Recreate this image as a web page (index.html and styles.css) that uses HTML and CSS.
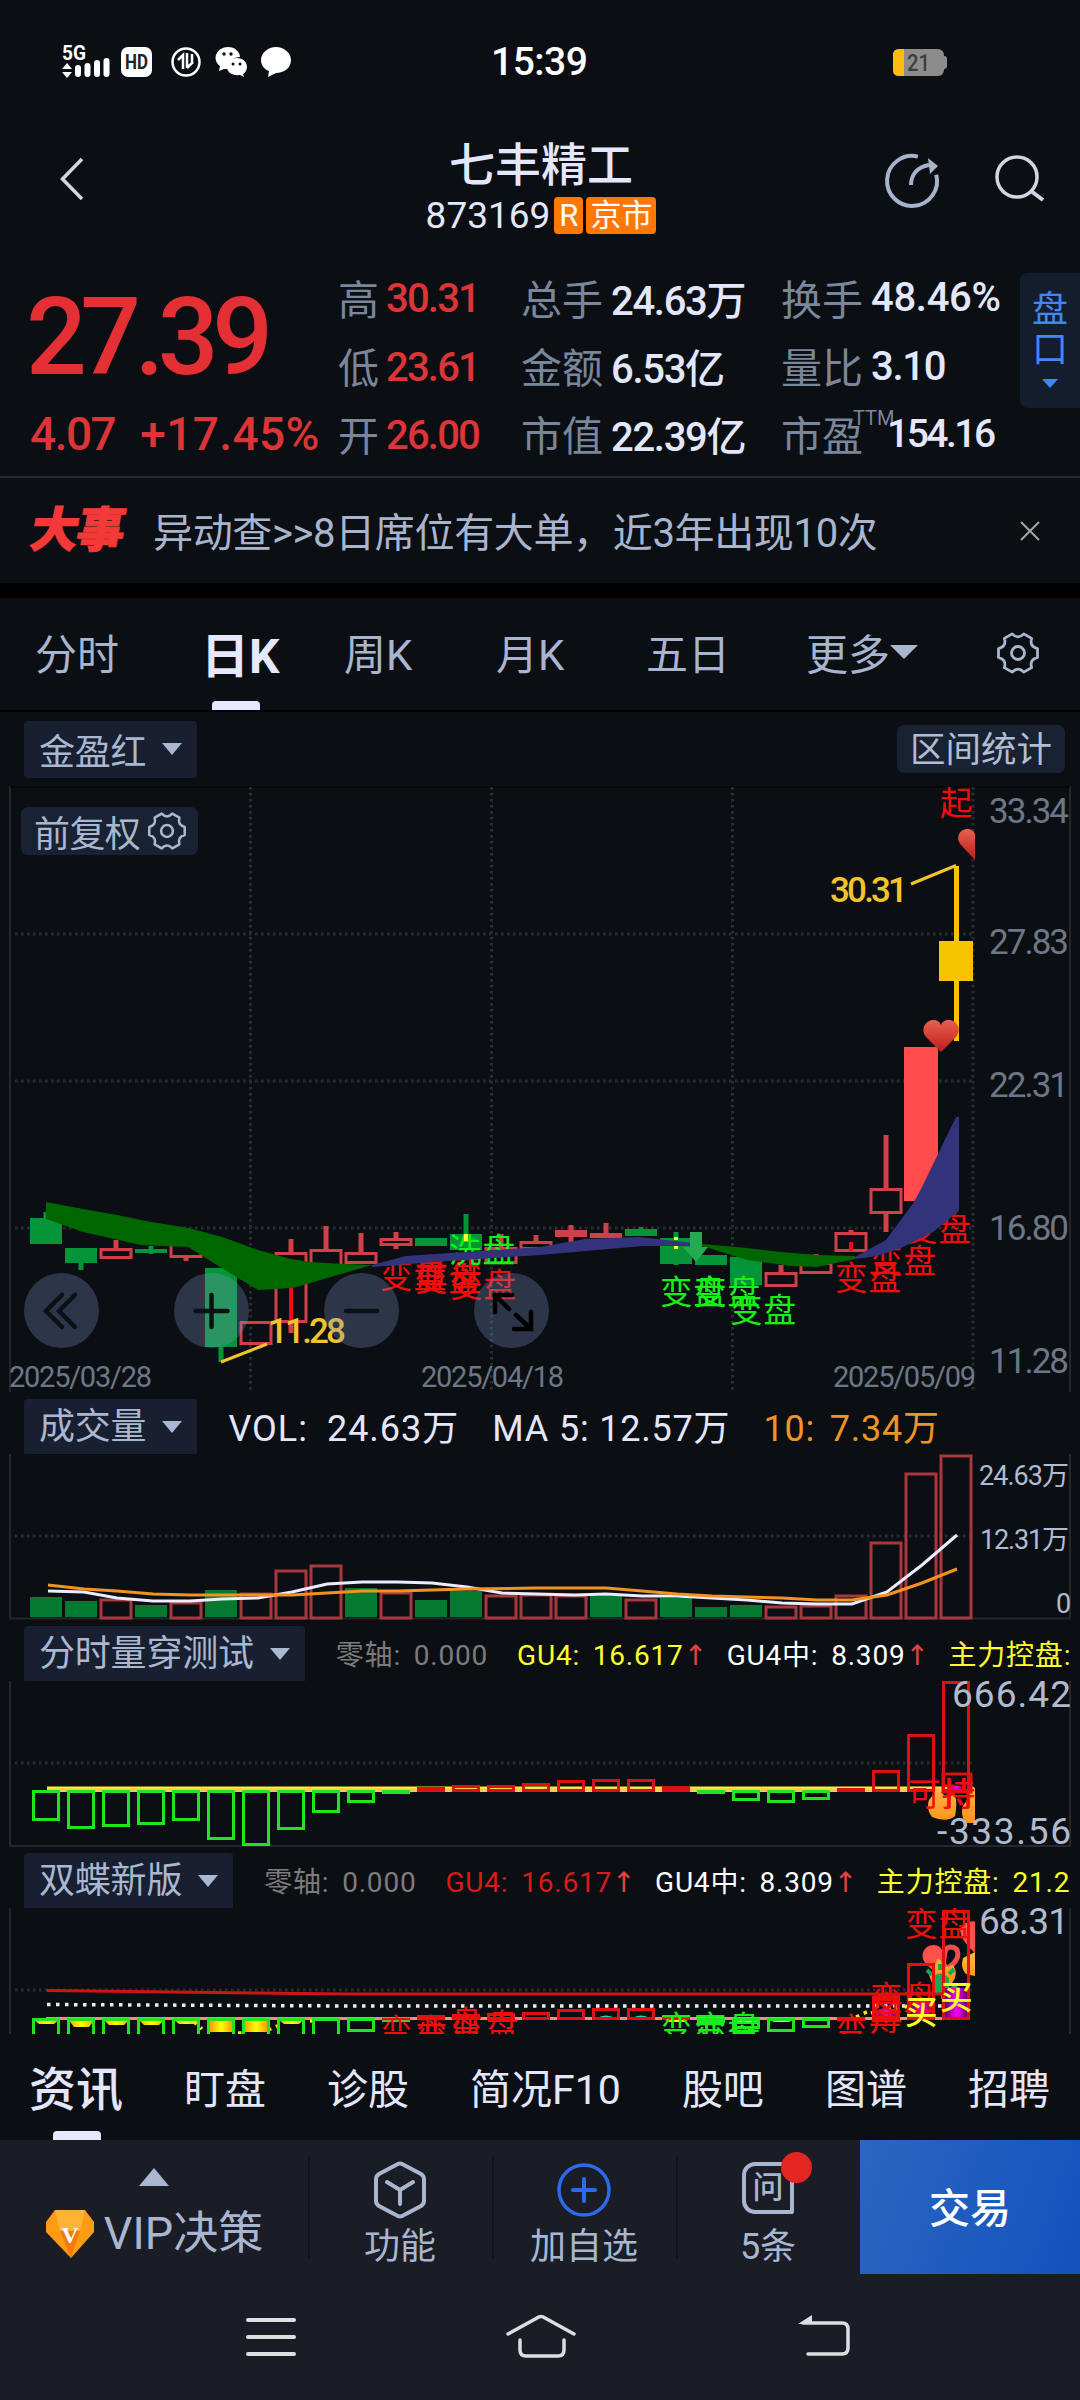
FILE: index.html
```html
<!DOCTYPE html>
<html lang="zh-CN">
<head>
    <meta charset="UTF-8">
    <meta name="viewport" content="width=device-width, initial-scale=1.0">
    <title>七丰精工 873169</title>
    <link rel="stylesheet" href="styles.css">
</head>
<body>
    <div class="status-bar">
        <svg class="status-icons" width="240" height="40" viewBox="56 42 240 40">
            <text x="62" y="60" class="net" textLength="24" lengthAdjust="spacingAndGlyphs">5G</text>
            <path d="M67 63l5 6h-10zM67 78l5-6h-10z" fill="#fff"/>
            <path d="M78 74v-6M87.500 74v-8M97 74v-11M106.500 74v-13" stroke="#fff" stroke-width="6" stroke-linecap="round"/>
            <rect x="121" y="47" width="31" height="30" rx="7" fill="#fff"/>
            <text x="125" y="69" class="hd" textLength="23" lengthAdjust="spacingAndGlyphs">HD</text>
            <circle cx="186" cy="62" r="13.500" fill="none" stroke="#fff" stroke-width="2.500"/>
            <path d="M178 60l5-5v14M187 53v15M187 68l6-6M192 54v8" fill="none" stroke="#fff" stroke-width="2.500"/>
            <path d="M228 47c7 0 12 5 12 10-7 0-13 5-12 12l-4 0-5 2 1-5c-9-7-3-19 8-19z" fill="#fff"/>
            <path d="M237 58c6 0 10 4 10 9 0 3-2 6-4 7l1 3-4-2c-8 1-13-3-13-8s4-9 10-9z" fill="#fff"/>
            <g fill="#0b0f14"><circle cx="224" cy="54" r="1.700"/><circle cx="231" cy="54" r="1.700"/><circle cx="233" cy="64" r="1.500"/><circle cx="240" cy="64" r="1.500"/></g>
            <path d="M276 47c8 0 15 6 15 13 0 8-7 13-15 13l-8 4 1-6c-5-2-8-6-8-11 0-7 7-13 15-13z" fill="#fff"/>
        </svg>
        <span class="clock">15:39</span>
        <svg class="battery" width="56" height="30" viewBox="892 47 56 30">
            <rect x="893" y="49" width="51" height="27" rx="6" fill="#8c8c8c"/>
            <path d="M944 56q3 0 3 3v7q0 3-3 3z" fill="#8c8c8c"/>
            <path d="M904 49h-5q-6 0-6 6v15q0 6 6 6h5z" fill="#ffb90f"/>
            <text x="907" y="71" class="batt-num" textLength="23" lengthAdjust="spacingAndGlyphs">21</text>
        </svg>
    </div>

    <div class="title-bar">
        <svg class="back" width="30" height="50" viewBox="58 154 30 50"><path d="M82 159L62.500 179l19.500 20" fill="none" stroke="#d3d5e3" stroke-width="3.500"/></svg>
        <div class="stock-title">
            <h1>七丰精工</h1>
            <div class="code-row"><span class="code">873169</span><span class="tag">R</span><span class="tag tag-market">京市</span></div>
        </div>
        <svg class="title-icons" width="174" height="60" viewBox="880 150 174 60" fill="none">
            <path d="M914 156A25 25 0 1 0 935 171" stroke="#a5b4cb" stroke-width="4" transform="rotate(9 912 181)"/>
            <path d="M911 185c0-10 6-18 18-20" stroke="#a5b4cb" stroke-width="4"/>
            <path d="M928 158l10 8-8 8z" fill="#a5b4cb"/>
            <circle cx="1017" cy="177" r="20" stroke="#d3d5e3" stroke-width="3.500"/>
            <path d="M1031 191l12 9" stroke="#d3d5e3" stroke-width="4"/>
        </svg>
    </div>

    <div class="quote">
        <div class="price-box">
            <div class="price">27.39</div>
            <div class="change"><span>4.07</span><span class="pct">+17.45%</span></div>
        </div>
        <div class="stats">
            <label>高</label><b class="up">30.31</b><label>总手</label><b>24.63万</b><label>换手</label><b class="turnover">48.46%</b>
            <label>低</label><b class="up">23.61</b><label>金额</label><b>6.53亿</b><label>量比</label><b>3.10</b>
            <label>开</label><b class="up">26.00</b><label>市值</label><b>22.39亿</b><label class="pe">市盈<sup>TTM</sup></label><b class="pe-value">154.16</b>
        </div>
        <div class="pankou"><span>盘</span><span>口</span><i></i></div>
    </div>

    <div class="news">
        <span class="news-logo">大事</span>
        <span class="news-text">异动查&gt;&gt;8日席位有大单，近3年出现10次</span>
        <svg width="20" height="20" viewBox="0 0 20 20"><path d="M1 1l18 18M19 1L1 19" stroke="#a4a6a4" stroke-width="2"/></svg>
    </div>

    <div class="period-tabs">
        <span>分时</span>
        <span class="active">日K</span>
        <span>周K</span>
        <span>月K</span>
        <span>五日</span>
        <span class="more">更多<i class="arrow-down"></i></span>
        <svg width="44" height="44" viewBox="-22 -23 44 44"><use href="#gear"/></svg>
    </div>

    <div class="chart-tools">
        <span class="picker">金盈红<i class="arrow-down"></i></span>
        <span class="range-btn">区间统计</span>
    </div>

    <div class="main-chart">
        <svg id="kline" width="1080" height="606" viewBox="0 786 1080 606">
            <defs>
                <g id="gear" fill="none" stroke="#a9b7d0" stroke-width="2.800" stroke-linejoin="round">
                    <path d="M19.500-4.500V4.500Q11.300 6.500 13.600 14.600L5.800 19.100Q0 13-5.800 19.100L-13.600 14.600Q-11.300 6.500-19.500 4.500V-4.500Q-11.300-6.500-13.600-14.600L-5.800-19.100Q0-13 5.800-19.100L13.600-14.600Q11.300-6.500 19.500-4.500Z"/>
                    <circle r="6.500"/>
                </g>
                <linearGradient id="heartFill" x1="0" y1="0" x2="0" y2="1"><stop offset="0" stop-color="#e8604f"/><stop offset="1" stop-color="#bd1d1c"/></linearGradient>
                <linearGradient id="thumbFill" x1="0" y1="0" x2="0" y2="1"><stop offset="0" stop-color="#ffb74a"/><stop offset="1" stop-color="#ff9216"/></linearGradient>
                <linearGradient id="purple"><stop offset="0" stop-color="#53005c"/><stop offset=".5" stop-color="#f500f5"/><stop offset="1" stop-color="#53005c"/></linearGradient>
                <linearGradient id="gold"><stop offset="0" stop-color="#ff9d00"/><stop offset=".5" stop-color="#ffff00"/><stop offset="1" stop-color="#ff9d00"/></linearGradient>
                <clipPath id="plot"><rect x="10" y="780" width="965" height="1254"/></clipPath>
            </defs>
            <path d="M10 1392V786H1070V1392" class="frame"/>
            <path d="M10 786H1070" stroke="#030507" stroke-width="3"/>
            <path d="M250.500 787V1390M491.500 787V1390M732.500 787V1390M973 787V1390M15 934H973M15 1081H973M15 1228H973" class="grid"/>
            <g id="candles"></g>
            <g clip-path="url(#plot)">
                <g class="mark red">
                    <text x="380" y="1288">变盘</text><text x="415" y="1291">变盘</text><text x="415" y="1283">盘</text>
                    <text x="450" y="1297">变盘</text><text x="450" y="1283">变</text>
                    <text x="835" y="1290">变盘</text><text x="870" y="1273">变盘</text><text x="905" y="1241">变盘</text>
                    <text x="940" y="815">起爆</text>
                </g>
                <g class="mark lime">
                    <text x="660" y="1304">变盘</text><text x="694" y="1304">变盘</text><text x="730" y="1322">变盘</text>
                    <text x="449" y="1262">洗盘</text>
                </g>
            </g>
            <path d="M46 1202L83 1209L117 1215L151 1222L189 1228L222 1237L258 1250L291 1259L310 1262L344 1264L372 1265L293 1288L258 1290L238 1278L188 1247L141 1245L83 1232L46 1219Z" fill="#006700"/>
            <path d="M372 1265L406 1256L465 1252L540 1247L585 1239L640 1237L692 1243L692 1246L643 1246L540 1255L448 1261L372 1267Z" fill="#33337b"/>
            <path d="M691 1243L747 1248L781 1252L819 1255L855 1256V1259L817 1267L791 1266L747 1260L709 1248Z" fill="#006700"/>
            <path d="M855 1257L886 1240L914 1202L922 1187L956 1117H959V1211L933 1232L901 1248L877 1256L855 1259Z" fill="#33337b"/>
            <path d="M690 1232h12v15h6l-12 15l-13-15h7z" fill="#22ab50"/>
            <path d="M676 1237v3M676 1246v3M466 1234v7" stroke="#ffff2a" stroke-width="4"/>
            <g clip-path="url(#plot)" fill="url(#heartFill)">
                <path d="M941 1052l-14-14c-8-8-1-18 6-18 4 0 7 2 8 5 1-3 4-5 8-5 8 0 14 10 6 18z"/>
                <path d="M975 860l-13-14c-8-8-2-17 5-17 4 0 7 2 8 5 1-3 4-5 8-5 8 0 14 10 6 18z"/>
            </g>
            <path d="M221 1362L267 1344M911 884L956 865.500" stroke="#f3c32c" stroke-width="3"/>
            <g class="num gold">
                <text x="268" y="1343" textLength="78">11.28</text>
                <text x="830" y="902" textLength="78">30.31</text>
            </g>
            <g class="num axis">
                <text x="989" y="823" textLength="80">33.34</text>
                <text x="989" y="953.500" textLength="80">27.83</text>
                <text x="989" y="1097" textLength="80">22.31</text>
                <text x="989" y="1240" textLength="80">16.80</text>
                <text x="989" y="1373" textLength="80">11.28</text>
            </g>
            <g class="num date">
                <text x="9" y="1386.500" textLength="143">2025/03/28</text>
                <text x="421" y="1386.500" textLength="143">2025/04/18</text>
                <text x="833" y="1386.500" textLength="143">2025/05/09</text>
            </g>
        </svg>
        <span class="adjust">前复权<svg width="40" height="40" viewBox="-22 -22 44 44"><use href="#gear"/></svg></span>
        <div class="chart-btns">
            <button><svg viewBox="0 0 75 75"><path d="M38 22L22 38l16 16M51 22L35 38l16 16"/></svg></button>
            <button><svg viewBox="0 0 75 75"><path d="M37.500 22v32M21.500 38h32"/></svg></button>
            <button><svg viewBox="0 0 75 75"><path d="M22 38h31"/></svg></button>
            <button class="expand"><svg viewBox="0 0 75 75"><path d="M21 39V22h17M21 22l14 14M57 39v17H40M57 56L42 42"/></svg></button>
        </div>
    </div>

    <div class="sub-head vol-head">
        <span class="picker">成交量<i class="arrow-down"></i></span>
        <span>VOL: 24.63万</span><span class="ma">MA 5: 12.57万</span><span class="orange">10: 7.34万</span>
    </div>
    <svg id="volume" class="sub-chart" width="1080" height="166" viewBox="0 1454 1080 166">
        <path d="M10 1454V1618.500H1070V1454" class="frame"/>
        <path d="M15 1536H973" class="grid"/>
        <g id="vol-bars"></g>
        <path d="M48 1591L84 1592L117 1598L153 1601L190 1601L222 1599L258 1598L292 1592L327 1584L362 1582L398 1582L432 1583L467 1587L502 1593L537 1594L575 1595L606 1594L642 1596L677 1596L712 1598L747 1600L782 1603L817 1604L852 1604L887 1592L922 1565L957 1535" class="line" stroke="#ececff"/>
        <path d="M48 1585L84 1589L117 1591L153 1594L190 1595L292 1595L327 1593L362 1591L398 1591L432 1590L467 1589L537 1588L606 1588L642 1591L677 1594L712 1596L782 1598L817 1600L852 1600L887 1595L922 1583L957 1569" class="line" stroke="#f0941f"/>
        <g class="num vol-axis">
            <text x="979" y="1485" textLength="90">24.63万</text>
            <text x="980" y="1549" textLength="89">12.31万</text>
            <text x="1056" y="1613">0</text>
        </g>
    </svg>

    <div class="sub-head">
        <span class="picker">分时量穿测试<i class="arrow-down"></i></span>
        <span class="grey">零轴: 0.000</span><span class="yellow">GU4: 16.617<em>↑</em></span><span class="white">GU4中: 8.309<em>↑</em></span><span class="yellow">主力控盘:</span>
    </div>
    <svg id="gu" class="sub-chart" width="1080" height="166" viewBox="0 1681 1080 166">
        <path d="M10 1681V1846H1070V1681" class="frame"/>
        <path d="M15 1763H973" class="grid"/>
        <path d="M47 1789.500H958" stroke="#ffc568" stroke-width="5"/>
        <path d="M47 1787.500H958" stroke="#f8f028" stroke-width="2"/>
        <g clip-path="url(#plot)">
            <path d="M934 1786q5 3 10 9l10-1q4 7 1 22q-8 7-23 1q-6-8-3-17q6-6 5-14zM972 1786q5 3 10 9v28h-16q-6-8-3-17q7-9 9-20z" fill="url(#thumbFill)"/>
            <path d="M946 1790q12-9 20 0z" fill="url(#purple)"/>
            <g id="gu-bars"></g>
            <g class="mark red"><text x="908" y="1806">可持</text><text x="943" y="1806">持股</text></g>
        </g>
        <g class="num big-axis">
            <text x="952" y="1707" textLength="119">666.42</text>
            <text x="937" y="1844" textLength="134">-333.56</text>
        </g>
    </svg>

    <div class="sub-head">
        <span class="picker">双蝶新版<i class="arrow-down"></i></span>
        <span class="grey">零轴: 0.000</span><span class="red-text">GU4: 16.617<em>↑</em></span><span class="white">GU4中: 8.309<em>↑</em></span><span class="yellow">主力控盘: 21.202</span>
    </div>
    <svg id="butterfly" class="sub-chart" width="1080" height="126" viewBox="0 1908 1080 126">
        <path d="M10 1908V2040M1070 1908V2040" class="frame"/>
        <path d="M15 1990H973" class="grid"/>
        <g clip-path="url(#plot)">
            <path d="M46 2018.500H958" stroke="#ee8e80" stroke-width="3"/>
            <path d="M47 2004.500L350 2006H945" class="dots"/>
            <g fill="#ff5149">
                <path d="M941 1978l-14-13c-9-9-3-20 7-20 5 0 9 4 9 9l5 14z"/>
                <path d="M941 1973c5-14 1-25 9-26 11 0 9 11 3 17z" fill="none" stroke="#ef4f4c" stroke-width="5"/>
                <path d="M980 1922q-16-3-20 8q1 11 15 23h5z"/>
            </g>
            <path d="M963 1958l12-6v24l-9-2q-6-6-3-16zM929 1975q5-4 8-16q5-1 5 9l11-3q6 9-1 18h-20z" fill="url(#thumbFill)"/>
            <path d="M934 1991v-12q6-7 13 0v12zM927 1970l5 5M954 1969l-5 5M940 1964v6M951 1989l6-3M941 1997h6" stroke="#1da650" fill="#1da650" stroke-width="4"/>
            <g id="bf-bars"></g>
            <g class="mark red">
                <text x="380" y="2043">变</text><text x="415" y="2043">变</text><text x="415" y="2049">变</text><text x="450" y="2042">变</text><text x="450" y="2035">盘</text><text x="486" y="2038">盘</text>
                <text x="835" y="2042">变盘</text><text x="870" y="2010">变盘</text><text x="870" y="2020">盘</text><text x="905" y="1936">变盘</text>
            </g>
            <g class="mark lime"><text x="660" y="2040">变</text><text x="694" y="2040">变盘</text><text x="694" y="2048">变盘</text></g>
            <path d="M47 1990.500L350 1994H945" class="line" stroke="#d01414"/>
            <g class="mark yellow-mark"><text x="905" y="2024">买</text><text x="940" y="2009">买</text></g>
        </g>
        <g class="num big-axis"><text x="979" y="1934" textLength="90">68.31</text></g>
    </svg>

    <div class="info-tabs">
        <span class="active">资讯</span><span>盯盘</span><span>诊股</span><span>简况F10</span><span>股吧</span><span>图谱</span><span>招聘</span>
    </div>

    <div class="bottom-bar">
        <div class="vip">
            <i class="arrow-up"></i>
            <div class="vip-label">
                <svg width="50" height="50" viewBox="0 0 50 50">
                    <path d="M10 1h30l9 12v10L26 49 1 23V13z" fill="#ff9c14"/>
                    <path d="M10 1h30l-5 21H15z" fill="#ffb336"/>
                    <path d="M15 22h20l-9 27z" fill="#f27a10"/>
                    <text x="25" y="34" class="vip-v">V</text>
                </svg>
                <span>VIP决策</span>
            </div>
        </div>
        <div class="tool">
            <svg width="60" height="60" viewBox="-30 -30 60 60" fill="none" stroke="#a9b6d0" stroke-width="4" stroke-linejoin="round" stroke-linecap="round"><path d="M-4-25Q0-28 4-25L21-16Q24-14 24-11V11Q24 14 21 16L4 25Q0 28-4 25L-21 16Q-24 14-24 11V-11Q-24-14-21-16ZM-13-8L0 0L13-8M0 0V14"/></svg>
            <span>功能</span>
        </div>
        <div class="tool">
            <svg width="60" height="60" viewBox="-30 -30 60 60" fill="none" stroke="#2c6ae8"><circle r="25" stroke-width="3.500"/><path d="M-11 0H11M0-11V11" stroke-width="4" stroke-linecap="round"/></svg>
            <span>加自选</span>
        </div>
        <div class="tool ask">
            <div class="ask-icon">问</div>
            <span>5条</span>
        </div>
        <div class="trade">交易</div>
    </div>

    <div class="nav-bar">
        <svg width="1080" height="126" viewBox="0 2274 1080 126" fill="none" stroke="#dedee0" stroke-width="4" stroke-linecap="round" stroke-linejoin="round">
            <path d="M248 2320H294M248 2337H294M248 2354H294"/>
            <path d="M508 2334L537 2318Q541 2315 545 2318L574 2334M520 2340V2350Q520 2356 526 2356H558Q564 2356 564 2350V2340" stroke-width="3.500"/>
            <path d="M803 2323H842Q848 2323 848 2329V2348Q848 2354 842 2354H808" stroke-width="3.500"/>
            <path d="M798 2324L812 2315V2324Z" fill="#dedee0" stroke="none"/>
        </svg>
    </div>

    <script src="charts.js"></script>
</body>
</html>
```
FILE: styles.css
```css
* {
    box-sizing: border-box;
    margin: 0;
    padding: 0;
}

body {
    width: 1080px;
    background: #0b0f14;
    color: #e4e7fb;
    font-family: Roboto, "Noto Sans CJK SC", sans-serif;
    overflow-x: hidden;
}

svg {
    display: block;
    flex: none;
}

span, b, label {
    white-space: nowrap;
}

/* status bar */
.status-bar {
    display: grid;
    grid-template-columns: 240px 1fr 56px;
    height: 124px;
    padding: 0 132px 0 56px;
    align-items: center;
}

.clock {
    font-size: 39px;
    font-weight: 500;
    color: #fff;
    padding-left: 195px;
    letter-spacing: -0.5px;
}

.net {
    font-size: 21px;
    font-weight: 700;
    fill: #fff;
}

.hd {
    font-size: 20px;
    font-weight: 700;
    fill: #20242a;
}

.batt-num {
    font-size: 23px;
    font-weight: 500;
    fill: #3d3d3d;
}

/* title */
.title-bar {
    display: grid;
    grid-template-columns: 30px 1fr 174px;
    height: 136px;
    padding: 0 26px 0 58px;
}

.back {
    margin-top: 30px;
}

.title-icons {
    margin-top: 26px;
}

.stock-title {
    display: flex;
    flex-direction: column;
    align-items: center;
    padding: 15px 0 0 114px;
}

h1 {
    font-size: 46px;
    line-height: 52px;
    font-weight: 500;
}

.code-row {
    display: flex;
    gap: 4px;
    margin-top: 6px;
    line-height: 37px;
}

.code {
    font-size: 37px;
}

.tag {
    background: #ff7706;
    color: #fff;
    border-radius: 4px;
    font-size: 31px;
    width: 29px;
    text-align: center;
}

.tag-market {
    width: 70px;
    margin-left: -1px;
}

/* quote */
.quote {
    display: grid;
    grid-template-columns: 308px 1fr 60px;
    height: 218px;
    padding-left: 30px;
    border-bottom: 2px solid #262a2f;
}

.price {
    font-size: 107px;
    line-height: 112px;
    margin-top: 22px;
    color: #e42f34;
    font-weight: 500;
    letter-spacing: -6.5px;
    margin-left: -4px;
}

.change {
    display: flex;
    gap: 25px;
    margin-top: 13px;
    font-size: 46px;
    line-height: 54px;
    font-weight: 500;
    color: #dd3437;
    letter-spacing: -1.5px;
}

.pct {
    letter-spacing: 0.4px;
}

.stats {
    display: grid;
    grid-template-columns: 48px 135px 90px 170px 90px 146px;
    grid-template-rows: 69px 68px 68px;
    padding-top: 2px;
    align-items: center;
}

.stats label {
    font-size: 41px;
    color: #79869b;
}

.stats b {
    font-size: 40px;
    font-weight: 500;
    letter-spacing: -1.3px;
    padding-top: 2px;
}

.stats .up {
    color: #dd3437;
    letter-spacing: -1.8px;
    padding-top: 4px;
}

.stats .turnover {
    letter-spacing: -0.3px;
}

.pe sup {
    display: inline-block;
    font-size: 20px;
    vertical-align: 26px;
    line-height: 1;
    width: 0;
    margin-left: -10px;
}

.stats .pe-value {
    padding-left: 16px;
    font-size: 39px;
    letter-spacing: -2.5px;
}

.pankou {
    margin-top: 13px;
    height: 135px;
    display: flex;
    flex-direction: column;
    align-items: center;
    padding-top: 17px;
    background: #141d2e;
    border-radius: 8px 0 0 8px;
    color: #4087f2;
    font-size: 36px;
    line-height: 40px;
}

.pankou i {
    margin-top: 9px;
    border: 8px solid transparent;
    border-top: 9px solid #4087f2;
    border-bottom: 0;
}

/* news */
.news {
    display: grid;
    grid-template-columns: 122px 1fr 20px;
    align-items: center;
    height: 105px;
    padding: 0 40px 0 31px;
}

.news-logo {
    font-size: 48px;
    font-weight: 900;
    color: #f33a38;
    transform: skewX(-10deg);
    -webkit-text-stroke: 1px #f33a38;
    letter-spacing: -2px;
    line-height: 50px;
}

.news-text {
    font-size: 40px;
    color: #a9b5cf;
    letter-spacing: -0.35px;
    padding-bottom: 2px;
}

/* period tabs */
.period-tabs {
    position: relative;
    display: grid;
    grid-template-columns: 166px 143px 152px 150px 160px 190px 44px;
    height: 129px;
    padding: 0 0 5px 35px;
    border-top: 15px solid #000;
    border-bottom: 2px solid #020304;
    align-items: center;
    font-size: 42px;
    color: #a9b5cf;
}

.period-tabs .active {
    font-size: 48px;
    font-weight: 700;
    color: #e6e8fd;
}

.active::after {
    content: "";
    position: absolute;
    left: 212px;
    bottom: 0;
    width: 48px;
    height: 9px;
    background: #e6e8fd;
    border-radius: 4px 4px 0 0;
}

.arrow-down {
    display: inline-block;
    border: 10.5px solid transparent;
    border-top: 12px solid #a9b7d0;
    border-bottom: 0;
}

.more {
    display: flex;
    align-items: center;
}

.more .arrow-down {
    border-width: 14px 14px 0;
}

/* chart */
.chart-tools {
    display: flex;
    justify-content: space-between;
    height: 74px;
    padding: 9px 15px 0 24px;
}

.picker {
    display: flex;
    align-items: center;
    gap: 16px;
    height: 57px;
    padding: 0 15px 1px 15px;
    background: #181f31;
    border-radius: 4px;
    font-size: 36px;
    letter-spacing: -0.2px;
    word-spacing: 0;
    color: #a9b7d0;
}

.range-btn {
    margin-top: 4px;
    height: 48px;
    width: 168px;
    text-align: center;
    line-height: 51px;
    background: #192233;
    border-radius: 7px;
    font-size: 35.5px;
    color: #b0bdd4;
}

.main-chart {
    position: relative;
    height: 606px;
}

.adjust {
    position: absolute;
    left: 21px;
    top: 21px;
    width: 177px;
    height: 48px;
    display: flex;
    align-items: center;
    gap: 7px;
    padding-left: 13px;
    background: #192233;
    border-radius: 7px;
    font-size: 36px;
    letter-spacing: -0.6px;
    color: #a9b7d0;
}

.chart-btns {
    position: absolute;
    left: 24px;
    top: 487px;
    display: flex;
    gap: 75px;
}

.chart-btns button {
    width: 75px;
    height: 75px;
    border: 0;
    border-radius: 50%;
    background: rgba(127, 150, 200, 0.29);
}

.chart-btns path {
    fill: none;
    stroke: #0c0f13;
    stroke-width: 4.5;
    stroke-linecap: round;
}

.chart-btns .expand path {
    stroke: #000;
}

.frame {
    fill: none;
    stroke: #24272b;
    stroke-width: 2;
}

.grid {
    fill: none;
    stroke: #2a2d31;
    stroke-width: 3;
    stroke-dasharray: 2.5 3.5;
}

.mark text {
    font-family: "Noto Sans CJK SC", sans-serif;
    font-size: 32.5px;
    letter-spacing: 1px;
}

.red { fill: #f20d0d; }
.lime { fill: #17f017; }
.yellow-mark { fill: #ffff1e; font-weight: 500; }

.num { font-size: 35px; }
.gold { fill: #f3c32c; font-weight: 500; }
.axis { fill: #6d7786; }
.date { fill: #6d7786; font-size: 29px; }
.vol-axis { fill: #b0bbd0; font-size: 27px; }
.big-axis { fill: #b0bbd0; font-size: 37px; }

.line {
    fill: none;
    stroke-width: 3;
}

.dots {
    fill: none;
    stroke: #eee;
    stroke-width: 3.5;
    stroke-dasharray: 3.5 5.5;
}

/* indicator headers */
.sub-head {
    display: flex;
    height: 61px;
    padding: 6px 0 0 24px;
    margin-right: 10px;
    overflow: hidden;
    font-size: 28px;
    line-height: 60px;
    letter-spacing: 0.8px;
    word-spacing: 5px;
}

.sub-head > span {
    flex: none;
}

.sub-head > span + span {
    margin-left: 29px;
}

.sub-head .picker + span {
    margin-left: 31px;
}

.sub-head em {
    font-style: normal;
    color: #e14343;
    font-family: "DejaVu Sans", sans-serif;
    display: inline-block;
    width: 20px;
    margin-right: -6px;
}

.vol-head {
    height: 62px;
    padding-top: 7px;
    font-size: 36px;
    letter-spacing: 1px;
    word-spacing: 9px;
}

.vol-head > span + span {
    margin-left: 33px;
}

.vol-head .ma {
    word-spacing: 0;
    letter-spacing: 0.8px;
}

.vol-head .orange {
    word-spacing: 5px;
    letter-spacing: 0.8px;
}

.sub-chart {
    overflow: hidden;
}

.grey { color: #7c7c7c; }
.yellow { color: #ffff2b; }
.white { color: #fff; }
.red-text { color: #d91a1a; }
.orange { color: #ef9427; }

/* info tabs */
.info-tabs {
    position: relative;
    display: flex;
    justify-content: space-between;
    height: 106px;
    padding: 0 30px 0 29px;
    line-height: 112px;
    font-size: 41px;
}

.info-tabs .active {
    font-size: 47px;
    font-weight: 500;
}

.info-tabs .active::after {
    left: 53px;
    bottom: 0;
}

/* bottom bar */
.bottom-bar {
    display: grid;
    grid-template-columns: 308px 184px 184px 184px 220px;
    height: 134px;
    background: #1a1d26;
    color: #a9b6d0;
}

.vip {
    display: flex;
    flex-direction: column;
    align-items: center;
    padding-top: 28px;
}

.arrow-up {
    border: 15px solid transparent;
    border-bottom: 18px solid #a9b7d0;
    border-top: 0;
}

.vip-label {
    display: flex;
    align-items: center;
    gap: 9px;
    margin-top: 17px;
    font-size: 45px;
    line-height: 62px;
}

.vip-v {
    font: bold 24px "Liberation Serif", serif;
    fill: #fff;
    text-anchor: middle;
}

.tool {
    display: flex;
    flex-direction: column;
    align-items: center;
    padding-top: 20px;
    font-size: 36px;
    line-height: 50px;
    background: linear-gradient(#11141b, #11141b) left center / 2px 102px no-repeat;
}

.tool span {
    margin-top: 2px;
}

.ask-icon {
    position: relative;
    width: 52px;
    height: 52px;
    margin: 2px 0 6px;
    border: 4px solid #a9b6d0;
    border-radius: 13px 13px 2px 13px;
    font-size: 31px;
    font-weight: 500;
    line-height: 43px;
    text-align: center;
}

.ask-icon::after {
    content: "";
    position: absolute;
    right: -22px;
    top: -14px;
    width: 31px;
    height: 31px;
    border-radius: 50%;
    background: #e42522;
}

.trade {
    background: linear-gradient(110deg, #2c66c2, #1252bd);
    color: #fff;
    font-size: 41px;
    font-weight: 500;
    line-height: 138px;
    height: 134px;
    text-align: center;
}

.nav-bar {
    height: 126px;
    background: #1a1d26;
}
```
FILE: charts.js
```js
const STEP = 35;
const FIRST = 46;
const cx = i => FIRST + STEP * i;
const rect = (x, y, w, h, fill, stroke) =>
    `<rect x="${x}" y="${y}" width="${w}" height="${h}" fill="${fill}"` + (stroke ? ` stroke="${stroke}" stroke-width="3"` : "") + "/>";

// [type, high, top, bottom, low]  g = green, r = hollow red, f = filled red
const candles = [
    ["g", 1212, 1218, 1244, 1244], ["g", 1248, 1248, 1263, 1270], ["r", 1240, 1248, 1259, 1259],
    ["g", 1246, 1249, 1253, 1254], ["r", 1240, 1240, 1258, 1261], ["g", 1268, 1268, 1347, 1362],
    ["r", 1321, 1321, 1345, 1345], ["r", 1239, 1252, 1323, 1333], ["r", 1226, 1249, 1267, 1267],
    ["r", 1233, 1252, 1264, 1264], ["r", 1232, 1238, 1246, 1249], ["g", 1238, 1238, 1246, 1246],
    ["g", 1214, 1234, 1250, 1250], ["r", 1234, 1247, 1264, 1264], ["r", 1235, 1241, 1250, 1250],
    ["f", 1225, 1230, 1237, 1243], ["f", 1223, 1233, 1238, 1238], ["g", 1227, 1229, 1236, 1236],
    ["g", 1232, 1238, 1264, 1265], ["g", 1255, 1255, 1265, 1265], ["g", 1257, 1257, 1285, 1285],
    ["r", 1265, 1272, 1287, 1287], ["r", 1254, 1262, 1274, 1274], ["r", 1230, 1232, 1252, 1252],
    ["r", 1135, 1188, 1214, 1232]
];

let html = "";
candles.forEach(([type, high, top, bottom, low], i) => {
    const color = type === "g" ? "#069438" : "#cf4048";
    const x = cx(i);
    if (high < top) html += rect(x - 2.5, high, 5, top - high, color);
    if (low > bottom) html += rect(x - 2.5, bottom, 5, low - bottom, color);
    if (type === "r") {
        html += rect(x - 15, top + 1.5, 30, bottom - top - 3, "none", color);
    } else {
        html += rect(x - 16, top, 32, bottom - top, color);
    }
});
html += rect(289, 1288, 4, 35, "#f20d0d") + rect(849, 1242, 4, 9, "#f20d0d");
html += rect(904, 1047, 34, 154, "#ff4b4b");
html += rect(954, 866, 5, 175, "#f8c400") + rect(939, 941, 34, 40, "#f8c400");
document.getElementById("candles").innerHTML = html;

// volume
const volumeTops = [1597, 1601, 1599, 1605, 1602, 1590, 1593, 1570, 1565, 1588, 1592, 1600, 1591, 1595,
    1594, 1595, 1596, 1599, 1598, 1607, 1605, 1606, 1605, 1595, 1542, 1473, 1455];
const volumeGreen = [0, 1, 3, 5, 9, 11, 12, 16, 18, 19, 20];
document.getElementById("vol-bars").innerHTML = volumeTops.map((y, i) =>
    volumeGreen.includes(i)
        ? rect(cx(i) - 16, y, 32, 1617 - y, "#047a31")
        : rect(cx(i) - 15, y + 1, 30, 1617 - y, "none", "#a8383e")
).join("");

// GU4 bars, [top, bottom]
const gu = [[1790, 1821], [1790, 1829], [1790, 1827], [1790, 1825], [1790, 1821], [1790, 1840], [1790, 1846],
    [1790, 1830], [1790, 1813], [1790, 1803], [1790, 1793], [1787, 1792], [1785, 1792], [1785, 1792], [1783, 1792],
    [1780, 1792], [1779, 1792], [1779, 1792], [1786, 1792], [1790, 1793], [1790, 1801], [1790, 1803], [1790, 1800],
    [1788, 1792], [1770, 1792], [1734, 1792], [1681, 1792]];
document.getElementById("gu-bars").innerHTML = gu.map(([a, b], i) => {
    const color = a === 1790 ? "#22e522" : "#dc1111";
    return rect(cx(i) - 12.5, a + 1.5, 25, Math.max(b - a - 3, 1), "none", color);
}).join("") + rect(943, 1774, 28, 18, "none", "#dc1111");

// lower panel, only its upper part is visible
const bf = [[2018, 2060], [2018, 2060], [2018, 2060], [2018, 2060], [2018, 2060], [2018, 2060], [2018, 2060],
    [2018, 2060], [2018, 2060], [2018, 2031], [2017, 2021], [2015, 2019], [2014, 2019], [2013, 2019], [2012, 2019],
    [2009, 2019], [2008, 2019], [2008, 2019], [2016, 2019], [2018, 2022], [2018, 2028], [2018, 2031], [2018, 2027],
    [2017, 2020], [1996, 2019], [1963, 2019], [1910, 2019]];
const goldDepth = [5, 8, 6, 6, 5, 13, 13, 5, 2, 1, 0, 0, 0, 0, 0, 0, 0, 0, 3, 4, 5, 3, 1];
html = "";
goldDepth.forEach((d, i) => {
    if (!d) return;
    const x = cx(i);
    html += d > 10
        ? rect(x - 11, 2019, 22, d, "url(#gold)")
        : `<path d="M${x - 13} 2019H${x + 14}L${x + 8} ${2019 + d}H${x - 7}Z" fill="url(#gold)"/>`;
});
html += `<path d="M194 2022l8 7M238 2033h4M268 2030l12-5M310 2021h3M856 2017l15-7M871 2013L915 2005" fill="none" stroke="#ffe414" stroke-width="3.5" stroke-dasharray="3.5 5"/>`;
[16, 17].forEach(i => html += `<path d="M${cx(i) - 9} 2018q9-5 18 0z" fill="#3cc8c0"/>`);
html += `<path d="M874 2018q2-10 12-10t12 10z" fill="url(#purple)"/>` + rect(910, 1998, 24, 20, "url(#purple)") + rect(944, 1988, 25, 31, "url(#purple)");
bf.forEach(([a, b], i) => {
    const red = i > 10 && (i < 19 || i > 22);
    html += rect(cx(i) - 12.5, a + 1.5, 25, Math.max(b - a - 2, 1), "none", red ? "#e40f0f" : "#22e522");
});
document.getElementById("bf-bars").innerHTML = html;
```
